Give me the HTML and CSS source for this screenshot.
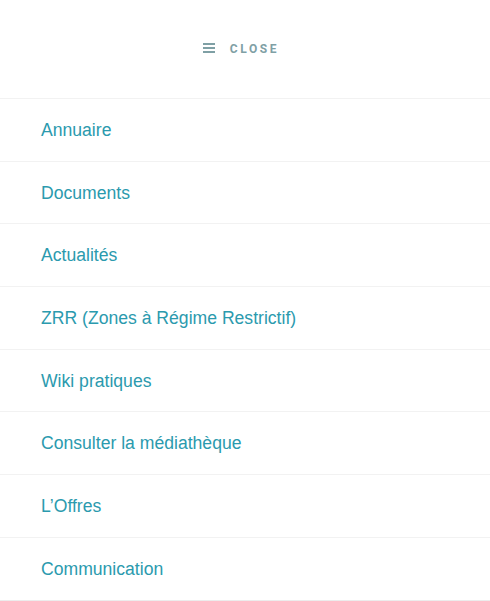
FILE: index.html
```html
<!DOCTYPE html>
<html lang="fr">
<head>
<meta charset="utf-8">
<link rel="stylesheet" href="styles.css">
</head>
<body>
<nav class="menu">
  <div class="menu-head">
    <button class="close-btn" type="button">
      <svg class="burger" width="12" height="10" viewBox="0 0 12 10" aria-hidden="true">
        <rect x="0" y="0" width="12" height="2" fill="currentColor"/>
        <rect x="0" y="4" width="12" height="2" fill="currentColor"/>
        <rect x="0" y="8" width="12" height="2" fill="currentColor"/>
      </svg>
      <span class="close-label">CLOSE</span>
    </button>
  </div>
  <ul class="menu-list">
    <li class="menu-item"><a href="#">Annuaire</a></li>
    <li class="menu-item"><a href="#">Documents</a></li>
    <li class="menu-item"><a href="#">Actualités</a></li>
    <li class="menu-item"><a href="#">ZRR (Zones à Régime Restrictif)</a></li>
    <li class="menu-item"><a href="#">Wiki pratiques</a></li>
    <li class="menu-item"><a href="#">Consulter la médiathèque</a></li>
    <li class="menu-item"><a href="#">L’Offres</a></li>
    <li class="menu-item"><a href="#">Communication</a></li>
  </ul>
</nav>
</body>
</html>
```

FILE: styles.css
```css
html, body {
  margin: 0;
  padding: 0;
  background: #ffffff;
}
body {
  font-family: "Liberation Sans", Arial, sans-serif;
}
.menu {
  width: 100%;
}
.menu-head {
  height: 98px;
  display: flex;
  justify-content: center;
  align-items: flex-start;
  padding-top: 40px;
  box-sizing: border-box;
}
.close-btn {
  display: flex;
  align-items: center;
  gap: 15px;
  background: none;
  border: 0;
  padding: 0;
  margin-right: 8px;
  color: #7fa0a5;
  cursor: pointer;
}
.burger {
  display: block;
  margin-top: -1px;
}
.close-label {
  font-family: Roboto, "Liberation Sans", sans-serif;
  font-weight: 700;
  font-size: 12px;
  letter-spacing: 2.6px;
  line-height: 16px;
  padding-top: 1px;
}
.menu-list {
  list-style: none;
  margin: 0;
  padding: 0;
}
.menu-item {
  border-top: 1px solid #f2f2f2;
  height: 61.7px;
  display: flex;
  align-items: center;
  padding-left: 41px;
}
.menu-item:last-child {
  border-bottom: 2px solid #ececec;
}
.menu-item a {
  color: #2b9aae;
  text-decoration: none;
  font-size: 17.6px;
  line-height: 20px;
}
```
